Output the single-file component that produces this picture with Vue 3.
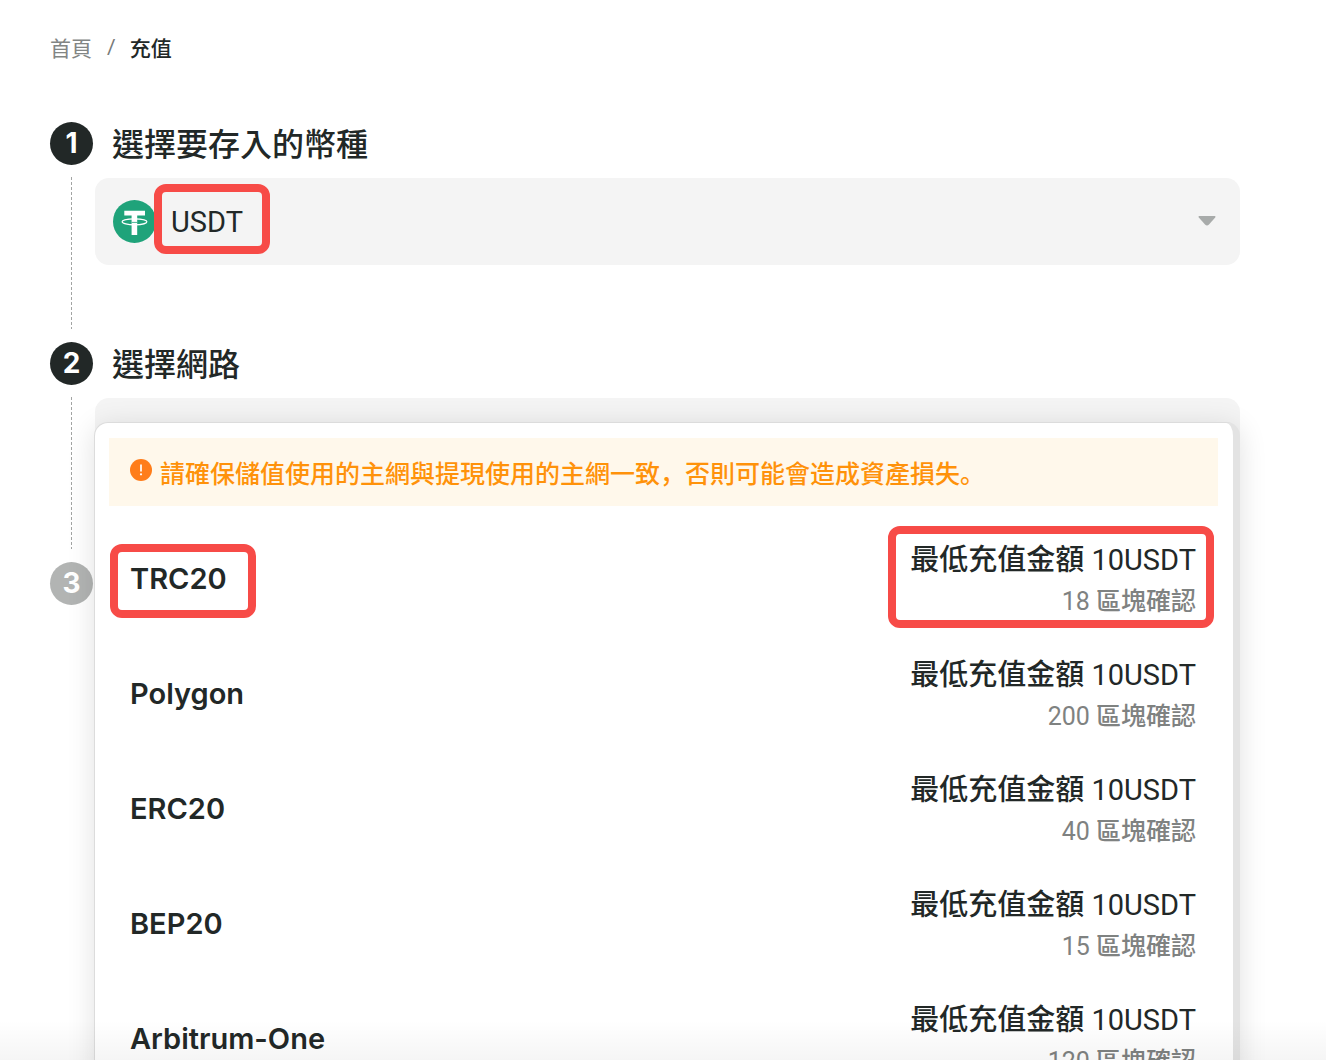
<script setup>
import { ref } from 'vue'

const coin = ref('USDT')
const network = ref('')
const networks = [
  { name: 'TRC20', blocks: 18, marked: true },
  { name: 'Polygon', blocks: 200 },
  { name: 'ERC20', blocks: 40 },
  { name: 'BEP20', blocks: 15 },
  { name: 'Arbitrum-One', blocks: 120 },
]
</script>

<template>
  <main class="page">
    <nav class="crumbs" aria-label="breadcrumb">
      <a href="#">首頁</a>
      <span class="slash">/</span>
      <span class="current">充值</span>
    </nav>

    <section class="step">
      <div class="rail">
        <span class="badge">1</span>
        <span class="line"></span>
      </div>
      <div class="body">
        <label class="title" for="coin">選擇要存入的幣種</label>
        <div class="field">
          <select id="coin" v-model="coin" class="select">
            <option>USDT</option>
          </select>
          <svg class="coin" viewBox="0 0 43 43" aria-hidden="true">
            <circle cx="21.5" cy="21.5" r="21.5" fill="#1fa37a" />
            <path d="M11.3 10.8H32V15.5H24.2V35H18.6V15.5H11.3Z" fill="#fff" />
            <ellipse cx="21.5" cy="21.8" rx="12.4" ry="3" fill="none" stroke="#fff" stroke-width="1.2" />
            <path d="M18.6 22.4H24.2" stroke="#1fa37a" stroke-width="0.8" />
          </svg>
          <svg class="caret" viewBox="0 0 18 10" aria-hidden="true">
            <path d="M1.2 0H16.8Q18 .2 17.2 1.4L11 8.5Q9 10.5 7 8.5L.8 1.4Q0 .2 1.2 0Z" fill="#a8abaa" />
          </svg>
          <span class="mark mark-coin"></span>
        </div>
      </div>
    </section>

    <section class="step">
      <div class="rail">
        <span class="badge">2</span>
        <span class="line"></span>
      </div>
      <div class="body">
        <label class="title" for="network">選擇網路</label>
        <div class="field">
          <select id="network" v-model="network" class="select">
            <option value=""></option>
            <option v-for="n in networks" :key="n.name">{{ n.name }}</option>
          </select>
          <div class="popup">
            <p class="notice">
              <svg class="alert" viewBox="0 0 22 22" aria-hidden="true">
                <circle cx="11" cy="11" r="11" fill="#ff7d1a" />
                <path d="M11 5.4V12.4" stroke="#fff" stroke-width="1.7" />
                <circle cx="11" cy="15.3" r="1.1" fill="#fff" />
              </svg>
              <span>請確保儲值使用的主網與提現使用的主網一致，否則可能會造成資產損失。</span>
            </p>
            <ul class="list">
              <li v-for="n in networks" :key="n.name">
                <button type="button" class="option" @click="network = n.name">
                  <span class="name">{{ n.name }}</span>
                  <span class="meta">
                    <span class="min"><span class="strong">最低充值金額</span> 10USDT</span>
                    <span class="blocks">{{ n.blocks }} <span class="strong">區塊確認</span></span>
                  </span>
                  <span v-if="n.marked" class="mark mark-name"></span>
                  <span v-if="n.marked" class="mark mark-meta"></span>
                </button>
              </li>
            </ul>
          </div>
        </div>
      </div>
    </section>

    <section class="step">
      <div class="rail">
        <span class="badge muted">3</span>
      </div>
    </section>

    <div class="fade"></div>
  </main>
</template>

<style>
body {
  margin: 0;
  background: #fff;
}
</style>

<style scoped>
.page {
  position: relative;
  box-sizing: border-box;
  height: 100vh;
  overflow: hidden;
  padding: 32px 86px 0 50px;
  color: #222827;
  font-family: Roboto, "Noto Sans CJK TC", sans-serif;
}
.crumbs {
  display: flex;
  align-items: center;
  height: 30px;
  margin-bottom: 60px;
  font-size: 21px;
}
.crumbs a {
  color: #828584;
  text-decoration: none;
}
.slash {
  margin: 0 14px 0 15px;
  color: #777a79;
}
.current {
  font-weight: 500;
}
.step {
  display: flex;
  height: 220px;
}
.rail {
  display: flex;
  flex-direction: column;
  align-items: center;
  gap: 12px;
  width: 43px;
}
.badge {
  width: 43px;
  height: 43px;
  border-radius: 50%;
  background: #222827;
  color: #fff;
  font: 700 28px/43px Inter, sans-serif;
  text-align: center;
}
.muted {
  background: #b2b4b3;
}
.line {
  width: 1px;
  height: 152px;
  background: repeating-linear-gradient(#a2a4a3 0 3px, transparent 3px 5px);
}
.body {
  flex: 1;
  min-width: 0;
  padding-left: 2px;
}
.title {
  display: block;
  height: 44px;
  margin-bottom: 12px;
  padding-left: 17px;
  font-size: 32px;
  font-weight: 500;
  line-height: 46px;
}
.field {
  position: relative;
}
.select {
  appearance: none;
  display: block;
  width: 100%;
  height: 87px;
  padding: 0 76px;
  border: 0;
  border-radius: 14px;
  background: #f4f4f4;
  color: inherit;
  font: 400 29px Roboto, sans-serif;
}
.coin {
  position: absolute;
  top: 22px;
  left: 18px;
  width: 43px;
  height: 43px;
}
.caret {
  position: absolute;
  top: 38px;
  right: 24px;
  width: 18px;
  height: 10px;
}
.mark {
  position: absolute;
  box-sizing: border-box;
  border: 8px solid #f74b47;
  border-radius: 12px;
}
.mark-coin {
  top: 6px;
  left: 59px;
  width: 116px;
  height: 70px;
}
.mark-name {
  top: 23px;
  left: 1px;
  width: 146px;
  height: 74px;
}
.mark-meta {
  top: 5px;
  right: 4px;
  width: 326px;
  height: 102px;
}
.popup {
  position: absolute;
  z-index: 1;
  top: 24px;
  left: -1px;
  right: 0;
  box-sizing: border-box;
  padding: 15px 15px 15px 14px;
  border: 1px solid #dcdcdc;
  border-right: 7px solid #e3e3e3;
  border-radius: 14px;
  background: #fff;
  box-shadow: 0 4px 28px rgba(0, 0, 0, 0.12);
}
.notice {
  display: flex;
  align-items: center;
  gap: 8px;
  height: 68px;
  margin: 0 0 15px;
  padding: 0 21px;
  background: #fff8eb;
  color: #ff920a;
  font-family: "Noto Sans CJK SC", sans-serif;
  font-size: 25px;
  font-weight: 500;
  white-space: nowrap;
}
.alert {
  flex: none;
  width: 22px;
  height: 22px;
  margin-bottom: 4px;
}
.list {
  margin: 0;
  padding: 0;
  list-style: none;
}
.option {
  position: relative;
  display: flex;
  align-items: center;
  justify-content: space-between;
  width: 100%;
  height: 115px;
  padding: 0 22px 0 21px;
  border: 0;
  background: none;
  color: inherit;
  font-family: inherit;
}
.name {
  font: 600 29px Inter, sans-serif;
}
.meta {
  display: flex;
  flex-direction: column;
  align-items: flex-end;
  padding-top: 4px;
  line-height: 41px;
}
.min {
  font-size: 29px;
}
.strong {
  font-weight: 500;
}
.blocks {
  color: #7f8281;
  font-size: 25px;
}
.fade {
  position: absolute;
  z-index: 2;
  right: 0;
  bottom: 0;
  left: 0;
  height: 40px;
  background: linear-gradient(transparent, rgba(0, 0, 0, 0.04));
  pointer-events: none;
}
</style>
